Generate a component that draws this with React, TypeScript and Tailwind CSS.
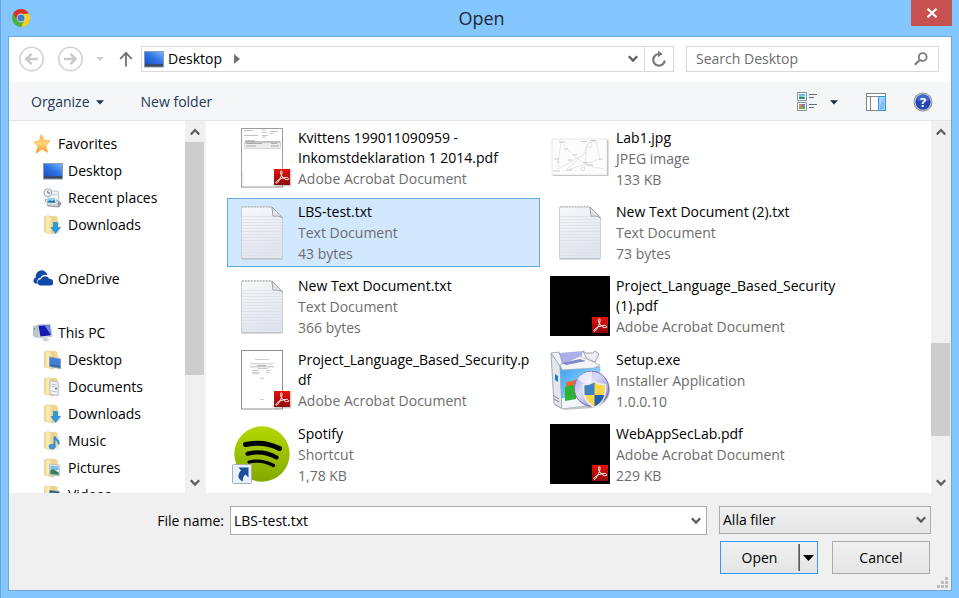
import React, { useState } from 'react';

type IconName =
  | 'star' | 'desktop' | 'recent' | 'downloads' | 'onedrive' | 'pc'
  | 'fdesktop' | 'documents' | 'music' | 'pictures' | 'videos';

function Chevron({ dir = 'down', className = '' }: { dir?: 'up' | 'down'; className?: string }) {
  return (
    <svg width="10" height="8" viewBox="0 0 10 8" fill="none" stroke="#5c5c5c" strokeWidth="2.2" className={className} aria-hidden="true">
      <path d={dir === 'down' ? 'M.8 1.2 5 5.6 9.2 1.2' : 'M.8 6.4 5 2 9.2 6.4'} />
    </svg>
  );
}

function ChromeIcon() {
  return (
    <svg width="20" height="20" viewBox="0 0 20 20" aria-hidden="true">
      <circle cx="10" cy="10" r="9" fill="#4caf3f" />
      <path d="M2.2 5.5A9 9 0 0 1 17.8 5.5L18 6H10L6 12Z" fill="#dc3226" />
      <path d="M17.8 5.5A9 9 0 0 1 10 19L13.6 12 13 6Z" fill="#fccf14" />
      <circle cx="10" cy="10" r="4.4" fill="#dfe8f0" />
      <circle cx="10" cy="10" r="3.6" fill="#3f7fc6" />
    </svg>
  );
}

function Monitor({ size = 20 }: { size?: number }) {
  return (
    <svg width={size} height={size} viewBox="0 0 20 20" aria-hidden="true">
      <defs>
        <linearGradient id="scr" x1="0" y1="1" x2="1" y2="0">
          <stop offset="0" stopColor="#1c50c4" />
          <stop offset=".5" stopColor="#2f74e4" />
          <stop offset="1" stopColor="#79b4ff" />
        </linearGradient>
      </defs>
      <rect x="0" y="2" width="20" height="16.5" fill="#8d9db0" />
      <rect x="1" y="3" width="18" height="12" fill="url(#scr)" />
      <rect x="1" y="15" width="18" height="2.6" fill="#3a4a66" />
    </svg>
  );
}

function Folder({ children }: { children?: React.ReactNode }) {
  return (
    <svg width="20" height="20" viewBox="0 0 20 20" aria-hidden="true">
      <path d="M14 5 16.5 6V18L9 19.500Z" fill="#000" opacity=".08" />
      <path d="M8 1.200H13L14.200 2.500V15.500L8 18Z" fill="#efd68a" stroke="#dcc27a" strokeWidth=".4" />
      <path d="M1.500 1.800 5 .6 10 2.400V19.200L1.500 17Z" fill="url(#fold)" stroke="#dcc27a" strokeWidth=".5" />
      {children}
    </svg>
  );
}

function SideIcon({ name }: { name: IconName }) {
  switch (name) {
    case 'star':
      return (
        <svg width="20" height="20" viewBox="0 0 20 20" aria-hidden="true">
          <defs>
            <linearGradient id="st" x1="0" y1="0" x2="0" y2="1">
              <stop offset="0" stopColor="#ffb53d" />
              <stop offset=".5" stopColor="#ffd877" />
              <stop offset="1" stopColor="#fb8f1c" />
            </linearGradient>
          </defs>
          <path d="M8.200 .4 11 6.300 17 6.800 13 11.600 14.800 18.400 9 15.200 3 19.300 4.800 12.400 .8 8 6.200 6.900Z" fill="url(#st)" stroke="#f5a64a" strokeWidth=".6" strokeLinejoin="round" />
        </svg>
      );
    case 'desktop':
      return <Monitor />;
    case 'recent':
      return (
        <svg width="20" height="20" viewBox="0 0 20 20" aria-hidden="true">
          <path d="M6 3H15L16 14H5Z" fill="#f7fafc" stroke="#9aa5ae" strokeWidth=".7" />
          <path d="M9 5H14.5V8H9Z" fill="#d7e5ee" />
          <path d="M2 11.5H13L18 15 16 19 5 18Z" fill="#c9cfd4" stroke="#7e878e" strokeWidth=".8" />
          <path d="M4 9.500H12.5L13 15.500H3Z" fill="#8fd0ee" stroke="#f2f2f2" strokeWidth=".8" />
          <path d="M4 14.500 7 12 9 13.500 11 11.800 12.500 14.800Z" fill="#1d6f9c" />
          <path d="M15 14 18.5 15.5 15 18.5" fill="#8b9298" />
          <circle cx="4.800" cy="4.800" r="3.900" fill="#eef4f7" stroke="#97a5ae" strokeWidth="1" />
          <path d="M4.800 2.600V5H7" fill="none" stroke="#54636d" strokeWidth=".9" />
        </svg>
      );
    case 'downloads':
      return (
        <Folder>
          <path d="M10.500 7.500H14.500V12.500H17.500L12.500 18.500 8 12.500H10.500Z" fill="#2a9be2" stroke="#1b7cc0" strokeWidth=".6" />
        </Folder>
      );
    case 'onedrive':
      return (
        <svg width="20" height="20" viewBox="0 0 20 20" aria-hidden="true">
          <path d="M2 14.500A3.400 3.400 0 0 1 2.800 8.400 5.400 5.400 0 0 1 14.500 6.200 5 5 0 0 0 7.600 8.800C4.400 9 3.600 12.600 5 14.500Z" fill="#0f4aa8" />
          <path d="M7.600 16.400A3 3 0 0 1 8 10.300 4.600 4.600 0 0 1 16.500 10 3.200 3.200 0 0 1 17.600 16.400Z" fill="#0f4aa8" />
        </svg>
      );
    case 'pc':
      return (
        <svg width="20" height="20" viewBox="0 0 20 20" aria-hidden="true">
          <path d="M.5 3.500 5 2.500V14.500L.5 13Z" fill="#c2cad0" stroke="#8f999f" strokeWidth=".5" />
          <path d="M1.500 5V7" stroke="#4caf50" strokeWidth="1" />
          <path d="M4.500 1.800 17.500 1 19.200 13.500 6.500 15Z" fill="#d7dce0" stroke="#a8b0b6" strokeWidth=".5" />
          <path d="M5.500 2.800 16.500 2 18 12.200 7.400 13.600Z" fill="#1419b0" />
          <path d="M11.500 2.400 16.500 2 18 12.200Z" fill="#6f84ee" />
          <path d="M8.500 17 12 14.500 17 16.500 13 18.800Z" fill="#cfd4d8" />
        </svg>
      );
    case 'fdesktop':
      return (
        <Folder>
          <path d="M6.500 7 17.500 9V18.500L6.500 16.500Z" fill="#3f7fd8" stroke="#7f93a8" strokeWidth=".8" />
          <path d="M7.200 14.800 17 16.700" stroke="#345" strokeWidth=".8" />
        </Folder>
      );
    case 'documents':
      return (
        <Folder>
          <path d="M7 3.500 15 5.200V18.500L7 17Z" fill="#f3f5f7" stroke="#a3a8ae" strokeWidth=".7" />
          <path d="M8.500 7 13.500 8M8.500 9.200 12 10M8.500 14 13.500 15" stroke="#9db1c8" strokeWidth=".8" />
          <path d="M12 11.500H14" stroke="#3973b8" strokeWidth="1.400" />
        </Folder>
      );
    case 'music':
      return (
        <Folder>
          <path d="M11.500 5.500C12 9 17 9 15.500 13.500" fill="none" stroke="#2b8fd6" strokeWidth="2" />
          <path d="M11.500 6V15.500" stroke="#2b8fd6" strokeWidth="1.800" />
          <ellipse cx="9.200" cy="15.600" rx="3.200" ry="2.400" fill="#3b9ade" stroke="#1f6fae" strokeWidth=".5" />
        </Folder>
      );
    case 'pictures':
      return (
        <Folder>
          <path d="M6.500 6 16.500 7.500V18L6.500 17Z" fill="#eff6fa" stroke="#a8b4ba" strokeWidth=".7" />
          <path d="M7.300 7.200 15.700 8.400V12L7.300 13.500Z" fill="#7fc0e8" />
          <path d="M7.300 16.200V12.500L10 11 15.700 14.500V17Z" fill="#3c7c5e" />
        </Folder>
      );
    default:
      return (
        <Folder>
          <path d="M6.500 5 16.500 6.500V17.500L6.500 16.500Z" fill="#31506e" stroke="#a8b4ba" strokeWidth=".7" />
          <path d="M8 7 15 8V13L8 12Z" fill="#3f8fb0" />
        </Folder>
      );
  }
}

function AcrobatBadge() {
  return (
    <g>
      <rect x="42.5" y="41.5" width="17" height="17" fill="#000" opacity=".18" />
      <rect x="42" y="41" width="16" height="16" fill="url(#acro)" />
      <path
        d="M49.2 42.800C47.800 43 48.400 45.600 49.800 48 51.400 50.600 54 52 56 51.600 57.500 51.200 56.600 49.400 54.400 49.400 51 49.400 46.400 51.200 44.400 53.600 43.200 55.400 44.600 56 45.800 54.400 47.600 52 50 47.400 50.100 44.400 50.100 43.200 49.800 42.600 49.200 42.800Z"
        fill="none" stroke="#fff" strokeWidth="1"
      />
    </g>
  );
}

function Defs() {
  return (
    <svg width="0" height="0" className="absolute" aria-hidden="true">
      <defs>
        <linearGradient id="fold" x1="0" y1="0" x2="1" y2="0">
          <stop offset="0" stopColor="#eed78e" />
          <stop offset=".4" stopColor="#faeebb" />
          <stop offset="1" stopColor="#eed386" />
        </linearGradient>
        <linearGradient id="acro" x1="0" y1="0" x2="0" y2="1">
          <stop offset="0" stopColor="#e8100c" />
          <stop offset="1" stopColor="#8b0a08" />
        </linearGradient>
        <linearGradient id="paper" x1="0" y1="0" x2=".4" y2="1">
          <stop offset="0" stopColor="#f7f8f9" />
          <stop offset="1" stopColor="#e1e5ee" />
        </linearGradient>
        <linearGradient id="spot" x1="0" y1="0" x2="0" y2="1">
          <stop offset="0" stopColor="#b4d800" />
          <stop offset="1" stopColor="#82a800" />
        </linearGradient>
        <linearGradient id="boxfront" x1="0" y1="0" x2="1" y2="1">
          <stop offset="0" stopColor="#3aa0f4" />
          <stop offset="1" stopColor="#c4ecff" />
        </linearGradient>
        <linearGradient id="disc" x1="0" y1="0" x2="1" y2="1">
          <stop offset="0" stopColor="#a09dea" />
          <stop offset=".4" stopColor="#dcdcf8" />
          <stop offset="1" stopColor="#7a76d6" />
        </linearGradient>
      </defs>
    </svg>
  );
}

type Thumb = 'receipt' | 'text' | 'paper' | 'spotify' | 'jpg' | 'black' | 'setup';

function ThumbArt({ kind }: { kind: Thumb }) {
  switch (kind) {
    case 'receipt':
      return (
        <>
          <rect x="9.5" y=".5" width="41" height="58.500" fill="#fff" stroke="#9d9d9d" />
          <path d="M9 59.500H51" stroke="#c4c4c4" />
          <path d="M12 2.500H21M30 2H34M38 3.500H46M12 7.500H26M30 4.500H35M30 7.500H36M38 5.500H41M30 9H34" stroke="#b5b5b5" strokeWidth=".8" />
          <rect x="12.500" y="14.500" width="36" height="6" fill="#ececec" stroke="#bbb" strokeWidth=".5" />
          <path d="M13 12.800H23M14 15.500H30M39 15.500H45M14 18H24M39 18H47" stroke="#999" strokeWidth=".8" />
          <path d="M13 13.800H48.500" stroke="#777" strokeWidth=".7" />
          <path d="M11 45V57" stroke="#ccc" strokeDasharray="1 1.400" />
          <AcrobatBadge />
        </>
      );
    case 'paper':
      return (
        <>
          <rect x="9.5" y=".5" width="41" height="58.500" fill="#fff" stroke="#8f8f8f" />
          <path d="M23 9.500H37M18 13.800H42M26 18.500H36M20 20.500H27M20 22.500H27M34 20.500H39M34 22.500H38M20 23.800H27M28 28.300H32M28 49.500H32" stroke="#c0c0c0" strokeWidth=".8" />
          <path d="M25 15.500H34M18 16.800H42" stroke="#999" strokeWidth=".7" />
          <AcrobatBadge />
        </>
      );
    case 'text':
      return (
        <>
          <path d="M9.5 5H40L50.5 16V56.5H9.5Z" fill="url(#paper)" stroke="#cbced2" />
          <path d="M9.5 57H50.5" stroke="#b3b7bc" />
          {[14, 17, 20, 23, 26, 29, 32, 35, 38, 41, 44, 47, 50, 53].map((y) => (
            <path key={y} d={`M10 ${y}.5H50`} stroke="#dae0ea" strokeWidth=".8" />
          ))}
          <path d="M10 4.800H39" stroke="#aaa" strokeDasharray="1.500 1.500" />
          <path d="M40 5 50.500 16C48 14 45 13.600 41 14.200Z" fill="#fafbfc" stroke="#8f959b" strokeWidth=".9" />
          <path d="M42 8V12H46" fill="none" stroke="#bbb" strokeWidth=".7" />
        </>
      );
    case 'jpg':
      return (
        <>
          <rect x="3" y="12" width="55.500" height="36" fill="#000" opacity=".25" />
          <rect x="2" y="11" width="55" height="36" fill="#fcfcfc" stroke="#d8d8d8" strokeWidth=".6" />
          <path d="M11 14 9 28 8 41M11 14 24 28 35 36 15 43 34 26M34 26 37 18 35 36 50 31M46 13 50 31M37 18 40 14 46 13M35 36 43 39 54 41M8 41 24 32 34 26M35 36 34 41" fill="none" stroke="#e2e2e2" strokeWidth=".8" />
          <path d="M9 14H15M31 13.500H37M40 12.500H46M14 21H18M23 27H27M33 34.500H38M4 31H9M3 43H10M7 34H9M17 42H22M49 31H53M36 37H43M18 32H22" stroke="#cbcbcb" strokeWidth="1" />
          <circle cx="39.500" cy="17" r="2.600" fill="none" stroke="#dedede" strokeWidth=".8" />
          <circle cx="33" cy="41" r="1.800" fill="none" stroke="#d8d8d8" strokeWidth=".8" />
        </>
      );
    case 'black':
      return (
        <>
          <rect width="60" height="60" fill="#000" />
          <AcrobatBadge />
        </>
      );
    case 'spotify':
      return (
        <>
          <circle cx="30" cy="30" r="27.700" fill="url(#spot)" />
          <g fill="none" stroke="#000" strokeLinecap="round">
            <path d="M13.500 20.500Q32 16.500 47.500 24.500" strokeWidth="5" />
            <path d="M15.500 29.700Q31 25.800 44.500 33.500" strokeWidth="4.200" />
            <path d="M17 38Q30 35 41.500 41.500" strokeWidth="3.200" />
          </g>
          <rect x="0.5" y="40.500" width="19" height="19" rx="1" fill="#e9f0f8" stroke="#a9adb2" />
          <path d="M6.500 43.500H16.500V53.500L13.500 50.500C11 52.500 10.500 55 11 57.500 6.500 56 4.500 51.500 9 46.500Z" fill="#1f4f9a" />
        </>
      );
    default:
      return (
        <>
          <path d="M4 55 14 60 44 58V54Z" fill="#555" opacity=".35" />
          <path d="M1 4 10 14 12 58.500 4 54Z" fill="#e4e6ea" stroke="#93979d" strokeWidth=".8" />
          <path d="M10 14 50 17 48 54 12 58.500Z" fill="url(#boxfront)" stroke="#8ba4ba" strokeWidth=".6" />
          <path d="M12 48 48 46V54L12 58.500Z" fill="#f1f6fb" />
          <path d="M9 3 33 1 30 12 13 15Z" fill="#aab0ee" />
          <path d="M1 3 9 2 13 15 10 16Z" fill="#f2f3f5" stroke="#888c92" strokeWidth=".7" />
          <path d="M33 1 37 9 45 12 49 4 45 1 43 3 36 3Z" fill="#eceef1" stroke="#888c92" strokeWidth=".8" />
          <path d="M30 6 37 9 50 15 44 18 12 20 10 15Z" fill="#f3f4f6" stroke="#9a9ea4" strokeWidth=".6" />
          <path d="M12 13 30 9 36 11 16 15Z" fill="#8087cd" />
          <path d="M5 24 8 26V32L5 30Z" fill="#1876dd" />
          <path d="M4 46 9 49M4 49 9 52" stroke="#888" />
          <path d="M16 32 26 30V39L16 40Z" fill="#ea6a38" />
          <path d="M15 37Q20 34 26 36V49L15 51Z" fill="#2fb22f" />
          <circle cx="42.300" cy="39.500" r="17.500" fill="#555" opacity=".5" />
          <circle cx="41.500" cy="38.500" r="17.200" fill="url(#disc)" stroke="#6c69ad" strokeWidth=".8" />
          <path d="M41 38 27 29Q33 21 42 21.500Z" fill="#fff" opacity=".65" />
          <path d="M44.500 31.500Q39 35 33.500 34.500 32 51 44.500 57.500 57 51 55.500 34.500 50 35 44.500 31.500Z" fill="#fbd54c" stroke="#e8edf2" strokeWidth="1.600" />
          <path d="M44.500 32.500Q39.500 35.500 34.500 35.500L34.600 45H44.500Z" fill="#3b83c4" />
          <path d="M44.500 45H54.300Q52.500 52.500 44.500 56.500Z" fill="#1f5fae" />
        </>
      );
  }
}

interface FileEntry {
  name: string;
  type: string;
  size?: string;
  thumb: Thumb;
}

const files: FileEntry[] = [
  { name: 'Kvittens 199011090959 - Inkomstdeklaration 1 2014.pdf', type: 'Adobe Acrobat Document', thumb: 'receipt' },
  { name: 'Lab1.jpg', type: 'JPEG image', size: '133 KB', thumb: 'jpg' },
  { name: 'LBS-test.txt', type: 'Text Document', size: '43 bytes', thumb: 'text' },
  { name: 'New Text Document (2).txt', type: 'Text Document', size: '73 bytes', thumb: 'text' },
  { name: 'New Text Document.txt', type: 'Text Document', size: '366 bytes', thumb: 'text' },
  { name: 'Project_Language_Based_Security (1).pdf', type: 'Adobe Acrobat Document', thumb: 'black' },
  { name: 'Project_Language_Based_Security.pdf', type: 'Adobe Acrobat Document', thumb: 'paper' },
  { name: 'Setup.exe', type: 'Installer Application', size: '1.0.0.10', thumb: 'setup' },
  { name: 'Spotify', type: 'Shortcut', size: '1,78 KB', thumb: 'spotify' },
  { name: 'WebAppSecLab.pdf', type: 'Adobe Acrobat Document', size: '229 KB', thumb: 'black' },
];

const places: { label: string; icon: IconName; items: { label: string; icon: IconName }[] }[] = [
  {
    label: 'Favorites',
    icon: 'star',
    items: [
      { label: 'Desktop', icon: 'desktop' },
      { label: 'Recent places', icon: 'recent' },
      { label: 'Downloads', icon: 'downloads' },
    ],
  },
  { label: 'OneDrive', icon: 'onedrive', items: [] },
  {
    label: 'This PC',
    icon: 'pc',
    items: [
      { label: 'Desktop', icon: 'fdesktop' },
      { label: 'Documents', icon: 'documents' },
      { label: 'Downloads', icon: 'downloads' },
      { label: 'Music', icon: 'music' },
      { label: 'Pictures', icon: 'pictures' },
      { label: 'Videos', icon: 'videos' },
    ],
  },
];

function ScrollBar({ children }: { children: React.ReactNode }) {
  return (
    <div className="flex w-5 shrink-0 flex-col bg-[#f0f0f0] pr-px">
      <button type="button" aria-label="Scroll up" className="flex h-[21px] shrink-0 items-center justify-center">
        <Chevron dir="up" />
      </button>
      <div className="flex flex-1 flex-col">{children}</div>
      <button type="button" aria-label="Scroll down" className="flex h-[21px] shrink-0 items-center justify-center">
        <Chevron />
      </button>
    </div>
  );
}

function TitleBar() {
  return (
    <header className="grid h-9 shrink-0 grid-cols-[1fr_auto_1fr] items-center pl-[3px]">
      <ChromeIcon />
      <h1 className="text-lg text-[#1c2833]">Open</h1>
      <button type="button" aria-label="Close" className="flex h-[26px] w-[41px] items-center justify-center self-start justify-self-end bg-[#c75050]">
        <svg width="12" height="10" viewBox="0 0 12 10" stroke="#fff" strokeWidth="2.200" aria-hidden="true">
          <path d="M1.500 .8 10.500 9.200M10.500 .8 1.500 9.200" />
        </svg>
      </button>
    </header>
  );
}

function AddressRow() {
  return (
    <div className="flex h-[45px] shrink-0 items-center pr-3 pb-px pl-2.5">
      <button type="button" aria-label="Back" className="shrink-0">
        <svg width="26" height="26" viewBox="0 0 26 26" fill="none" aria-hidden="true">
          <circle cx="12.500" cy="13" r="11.700" stroke="#d2d2d2" strokeWidth="1.600" />
          <path d="M19 13H7.500M12.500 7.800 7.300 13 12.500 18.200" stroke="#cacaca" strokeWidth="2.500" />
        </svg>
      </button>
      <button type="button" aria-label="Forward" className="ml-[13px] shrink-0">
        <svg width="26" height="26" viewBox="0 0 26 26" fill="none" aria-hidden="true">
          <circle cx="12.500" cy="13" r="11.700" stroke="#d2d2d2" strokeWidth="1.600" />
          <path d="M6 13H17.500M12.500 7.800 17.700 13 12.500 18.200" stroke="#cacaca" strokeWidth="2.500" />
        </svg>
      </button>
      <button type="button" aria-label="Recent locations" className="ml-2 flex w-4 shrink-0 justify-center">
        <svg width="8" height="4" viewBox="0 0 8 4" aria-hidden="true"><path d="M0 0H8L4 4Z" fill="#d0d0d0" /></svg>
      </button>
      <button type="button" aria-label="Up one level" className="ml-2.5 flex w-4 shrink-0 justify-center">
        <svg width="14" height="16" viewBox="0 0 14 16" fill="none" stroke="#6f6f6f" strokeWidth="1.800" aria-hidden="true">
          <path d="M7 15.500V2M1.200 8 7 1.800 12.800 8" />
        </svg>
      </button>
      <div className="ml-[7px] flex h-[26px] flex-1 border border-[#d9d9d9] bg-white">
        <button type="button" className="flex items-center gap-1 pl-0.5 text-sm text-black">
          <Monitor />
          Desktop
        </button>
        <button type="button" aria-label="Show folders" className="ml-3 flex items-center">
          <svg width="6" height="10" viewBox="0 0 6 10" aria-hidden="true"><path d="M0 0 6 5 0 10Z" fill="#707070" /></svg>
        </button>
        <button type="button" aria-label="Previous locations" className="ml-auto flex w-[22px] items-center justify-center">
          <Chevron />
        </button>
        <button type="button" aria-label="Refresh" className="flex w-[29px] items-center justify-center border-l border-[#d9d9d9]">
          <svg width="16" height="18" viewBox="0 0 16 18" fill="none" aria-hidden="true">
            <path d="M8.500 4A5.800 5.800 0 1 0 13.800 10.500" stroke="#7a7a7a" strokeWidth="2.200" />
            <path d="M7 .8V7.200L11.800 4Z" fill="#7a7a7a" />
          </svg>
        </button>
      </div>
      <label className="ml-3 flex h-[26px] w-[253px] shrink-0 items-center border border-[#d9d9d9] bg-white pr-2.5 pl-[9px]">
        <input aria-label="Search Desktop" placeholder="Search Desktop" className="min-w-0 flex-1 text-sm outline-none placeholder:text-[#6d6d6d]" />
        <svg width="14" height="14" viewBox="0 0 14 14" fill="none" stroke="#7a7a7a" aria-hidden="true">
          <circle cx="8.700" cy="5" r="3.900" strokeWidth="1.800" />
          <path d="M5.800 8 .8 12.800" strokeWidth="2.200" />
        </svg>
      </label>
    </div>
  );
}

function ToolBar() {
  return (
    <div className="flex h-[39px] shrink-0 items-center border-b border-[#e3e5e8] bg-[#f4f6f8] pt-0.5 pr-[18px] pl-[22px] text-sm text-[#1e395b]">
      <button type="button" className="flex items-center gap-1.5">
        Organize
        <svg width="8" height="5" viewBox="0 0 8 5" aria-hidden="true"><path d="M0 .3H8L4 4.600Z" fill="#1e395b" /></svg>
      </button>
      <button type="button" className="ml-[37px]">New folder</button>
      <button type="button" aria-label="Change your view" className="ml-auto">
        <svg width="20" height="20" viewBox="0 0 20 20" aria-hidden="true">
          <g fill="#fff" stroke="#7f98a8">
            <rect x=".5" y=".5" width="9" height="8" />
            <rect x=".5" y="10.500" width="9" height="8" />
          </g>
          <rect x="2" y="2" width="6" height="2.500" fill="#67bfe9" />
          <path d="M2 7V4.800L5 4.400 8 5.500V7Z" fill="#2f8f6c" />
          <rect x="2" y="12" width="6" height="5" fill="#8f6fd0" />
          <path d="M2 12H4.500V17H2Z" fill="#e88b3c" />
          <path d="M5 14.500H8V17H4Z" fill="#55b84a" />
          <path d="M12 2.500H20M12 5.500H17M12 12.500H20M12 15.500H17" stroke="#5f6f80" />
        </svg>
      </button>
      <button type="button" aria-label="More view options" className="ml-[13px]">
        <svg width="8" height="5" viewBox="0 0 8 5" aria-hidden="true"><path d="M0 .3H8L4 4.600Z" fill="#0f2f4b" /></svg>
      </button>
      <button type="button" aria-label="Show the preview pane" className="ml-7">
        <svg width="20" height="18" viewBox="0 0 20 18" fill="#fff" aria-hidden="true">
          <rect x=".5" y=".5" width="19" height="17" stroke="#868686" />
          <path d="M.5 3.500H19.500M4.500 3.500V17.500" stroke="#868686" />
          <rect x="12.500" y="3.500" width="7" height="14" fill="#a5d2fb" stroke="#3b93e6" />
          <path d="M14 13 18 5V16H14Z" fill="#7dbdf8" />
        </svg>
      </button>
      <button type="button" aria-label="Get help" className="ml-[27px]">
        <svg width="20" height="20" viewBox="0 0 20 20" aria-hidden="true">
          <circle cx="10" cy="10" r="9.500" fill="#8c8f96" />
          <circle cx="10" cy="10" r="8.500" fill="#e0e5f0" />
          <circle cx="10" cy="10" r="7.700" fill="#2443b4" />
          <path d="M3 8A7.200 7.200 0 0 1 17 8Q10 11 3 8Z" fill="#5f86dc" opacity=".5" />
          <text x="10" y="14.500" textAnchor="middle" fontSize="13" fontWeight="700" fill="#fff">?</text>
        </svg>
      </button>
    </div>
  );
}

function Sidebar() {
  return (
    <div className="flex w-[197px] shrink-0 border-r border-[#f3f3f3]">
      <nav aria-label="Places" className="min-w-0 flex-1 overflow-hidden pt-[9px] text-sm text-black">
        <ul className="flex flex-col gap-[27px]">
          {places.map((group) => (
            <li key={group.label}>
              <button type="button" className="flex h-[27px] w-full items-center gap-[5px] pl-6">
                <SideIcon name={group.icon} />
                {group.label}
              </button>
              <ul>
                {group.items.map((item) => (
                  <li key={item.label}>
                    <button type="button" className="flex h-[27px] w-full items-center gap-[5px] pl-[34px] whitespace-nowrap">
                      <SideIcon name={item.icon} />
                      {item.label}
                    </button>
                  </li>
                ))}
              </ul>
            </li>
          ))}
        </ul>
      </nav>
      <ScrollBar>
        <div className="flex-[233] bg-[#cdcdcd]" />
        <div className="flex-[97]" />
      </ScrollBar>
    </div>
  );
}

function FileList({ selected, onSelect }: { selected: string; onSelect: (name: string) => void }) {
  return (
    <div className="flex min-w-0 flex-1">
      <ul className="grid min-w-0 flex-1 auto-rows-[70px] grid-cols-[repeat(auto-fill,313px)] gap-x-[5px] gap-y-1 overflow-hidden pt-[3px] pl-[21px]">
        {files.map((file) => (
          <li key={file.name}>
            <button
              type="button"
              onClick={() => onSelect(file.name)}
              className={
                'flex h-[69px] w-full items-start gap-1.5 border py-[3px] pr-1 pl-1 text-left text-sm ' +
                (file.name === selected ? 'border-[#66a7e8] bg-[#d1e8ff]' : 'border-transparent')
              }
            >
              <svg width="60" height="60" viewBox="0 0 60 60" className="shrink-0" aria-hidden="true">
                <ThumbArt kind={file.thumb} />
              </svg>
              <span className="flex min-w-0 flex-1 flex-col leading-[21px] text-[#6d6d6d]">
                <span className="leading-5 wrap-anywhere text-black">{file.name}</span>
                <span>{file.type}</span>
                {file.size && <span>{file.size}</span>}
              </span>
            </button>
          </li>
        ))}
      </ul>
      <ScrollBar>
        <div className="flex-[201]" />
        <div className="flex-[93] bg-[#cdcdcd]" />
        <div className="flex-[36]" />
      </ScrollBar>
    </div>
  );
}

function Footer({ fileName, onChange }: { fileName: string; onChange: (name: string) => void }) {
  return (
    <footer className="flex shrink-0 flex-col bg-[#f0f0f0] pt-[13px] text-sm text-black">
      <div className="flex items-start pr-5">
        <label htmlFor="file-name" className="w-[215px] shrink-0 text-right leading-[29px]">File name:</label>
        <div className="ml-1.5 flex h-[29px] flex-1 items-center border border-[#ababab] bg-white pr-[5px] pl-[3px]">
          <input id="file-name" value={fileName} onChange={(e) => onChange(e.target.value)} className="min-w-0 flex-1 outline-none" />
          <button type="button" aria-label="Previous file names"><Chevron /></button>
        </div>
        <div className="relative ml-3 w-[212px] shrink-0">
          <select aria-label="File type" className="block h-7 w-full appearance-none border border-[#ababab] bg-linear-to-b from-[#f0f0f0] to-[#e5e5e5] pl-[3px] outline-none">
            <option>Alla filer</option>
          </select>
          <Chevron className="pointer-events-none absolute top-2.5 right-[5px]" />
        </div>
      </div>
      <div className="flex justify-end gap-3.5 pt-1.5 pr-[21px]">
        <div className="flex h-[33px] w-[98px] border border-[#3399ff] bg-linear-to-b from-[#f0f0f0] to-[#e5e5e5]">
          <button type="button" className="flex-1">Open</button>
          <span className="my-0.5 w-0.5 border-l border-[#8a8a8a] bg-[#5a5a5a]" />
          <button type="button" aria-label="Open options" className="flex w-[17px] items-center justify-center pr-px">
            <svg width="11" height="6" viewBox="0 0 11 6" aria-hidden="true"><path d="M0 0H11L5.500 6Z" fill="#000" /></svg>
          </button>
        </div>
        <button type="button" className="h-[33px] w-[98px] border border-[#ababab] bg-linear-to-b from-[#f0f0f0] to-[#e5e5e5]">Cancel</button>
      </div>
      <svg width="11" height="11" viewBox="0 0 11 11" fill="#bcbcbc" className="mt-[3px] mr-[3px] mb-0.5 self-end" aria-hidden="true">
        <path d="M8 0h3v3h-3zM4 4h3v3h-3zM8 4h3v3h-3zM0 8h3v3h-3zM4 8h3v3h-3zM8 8h3v3h-3z" />
      </svg>
    </footer>
  );
}

export default function App() {
  const [selected, setSelected] = useState('LBS-test.txt');
  return (
    <div className="flex h-screen flex-col border-l border-[#6ba3d9] bg-[#84c6ff] pr-[7px] pb-[7px] pl-[7px] font-['Open_Sans','Noto_Sans',sans-serif]">
      <Defs />
      <TitleBar />
      <main className="flex min-h-0 flex-1 flex-col border border-[#6fa9dc] bg-white">
        <AddressRow />
        <ToolBar />
        <div className="flex min-h-0 flex-1">
          <Sidebar />
          <FileList selected={selected} onSelect={setSelected} />
        </div>
        <Footer fileName={selected} onChange={setSelected} />
      </main>
    </div>
  );
}
